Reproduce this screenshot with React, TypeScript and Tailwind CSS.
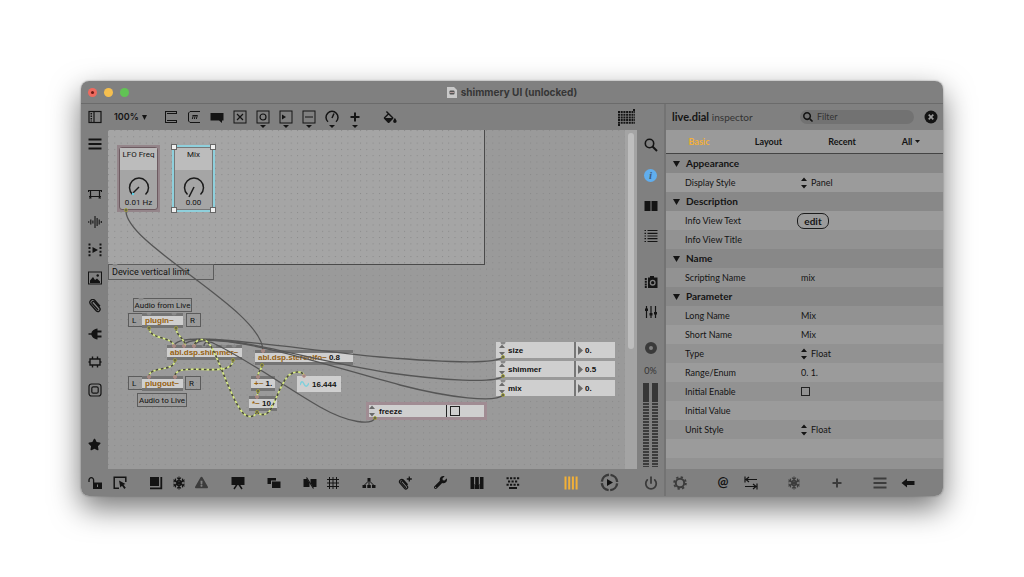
import React, { ReactNode, useState } from "react";
import { Power } from "lucide-react";
import { FaExclamationTriangle, FaSearch, FaStar, FaWrench } from "react-icons/fa";

type Tool = { label: string; icon: ReactNode; menu?: boolean };

const Svg = ({ children }: { children: ReactNode }) => (
  <svg width="14" height="14" viewBox="0 0 14 14" fill="none" stroke="currentColor" strokeWidth="1.2" aria-hidden="true">
    {children}
  </svg>
);

const BoxIcon = ({ children }: { children: ReactNode }) => (
  <Svg>
    <rect x="1" y="1" width="12" height="12" strokeWidth="1" />
    {children}
  </Svg>
);

const clipPath = "M10 11L4.300 4.600a1.300 1.300 0 0 1 2-1.700l5.200 5.900a2.200 2.200 0 0 1-3.300 3L2.300 5a2.900 2.900 0 0 1 4.400-3.700L12 7.200";

const ClipIcon = () => (
  <Svg>
    <path d={clipPath} strokeWidth="1.3" />
  </Svg>
);

const SnowIcon = () => (
  <Svg>
    {[0, 60, 120, 180, 240, 300].map((angle) => (
      <path key={angle} d="M7 7V.6M5 1.600l2 1.800 2-1.800M5.500 4.200L7 5.500l1.500-1.300" strokeWidth="1.1" transform={`rotate(${angle} 7 7)`} />
    ))}
  </Svg>
);

const GearIcon = () => (
  <Svg>
    <circle cx="7" cy="7" r="4.200" strokeWidth="2" />
    <circle cx="7" cy="7" r="5.900" strokeWidth="1.800" strokeDasharray="2.300 2.330" />
  </Svg>
);

const objectTools: Tool[] = [
  {
    label: "Object",
    icon: (
      <Svg>
        <path d="M1.500 1v12M1.500 1.500H13M1.500 12.500H13M3 3.500h10M3 10.500h10M12.500 1.500v2M12.500 10.500v2" strokeWidth="1" />
      </Svg>
    ),
  },
  {
    label: "Message",
    icon: (
      <Svg>
        <path d="M13 1.500H3L1.500 3v8L3 12.500h10" strokeWidth="1" />
        <path d="M5.300 9l1-3.500M7.300 9l1-3.500M9.300 9l1-3.500M5.500 5.500h5" strokeWidth="1" />
      </Svg>
    ),
  },
  {
    label: "Comment",
    icon: (
      <Svg>
        <path d="M.5 3h13v7.500H12V13l-3-2.500H.5z" fill="currentColor" stroke="none" />
      </Svg>
    ),
  },
  { label: "Toggle", icon: <BoxIcon><path d="M4 4l6 6M10 4l-6 6" /></BoxIcon> },
  { label: "Button", menu: true, icon: <BoxIcon><circle cx="7" cy="7" r="3" /></BoxIcon> },
  { label: "Number", menu: true, icon: <BoxIcon><path d="M3 4.500v5L7 7z" fill="currentColor" stroke="none" /></BoxIcon> },
  { label: "Slider", menu: true, icon: <BoxIcon><path d="M3 7h8" /></BoxIcon> },
  { label: "Dial", menu: true, icon: <Svg><path d="M3 11.800a6 6 0 1 1 8 0M7 8l2-4.500" strokeWidth="1.500" /></Svg> },
  { label: "Add", menu: true, icon: <Svg><path d="M7 2.500v9M2.500 7h9" strokeWidth="2" /></Svg> },
];

const sideTools: Tool[] = [
  {
    label: "Objects",
    icon: <Svg><path d="M1 3.500h12M1 9.500h12M2.500 3.500v8M11.500 3.500v8M1 11h2.500M10.500 11H13M.5 3v2M13.500 3v2" strokeWidth="1.200" /></Svg>,
  },
  {
    label: "Audio",
    icon: <Svg><path d="M.7 6.300v1.400M2.800 4.500v5M4.900 5.500v3M7 1v12M9.100 3v8M11.200 4.500v5M13.300 6v2" strokeWidth="1.100" /></Svg>,
  },
  {
    label: "Video",
    icon: (
      <Svg>
        <path d="M1.500.5v13M12.500.5v13" strokeWidth="2" strokeDasharray="2 1.600" />
        <path d="M4.500 4v6L10 7z" fill="currentColor" stroke="none" />
      </Svg>
    ),
  },
  {
    label: "Images",
    icon: (
      <Svg>
        <rect x=".5" y="1" width="13" height="12" strokeWidth="1" />
        <path d="M2 12V9.500L5 6l2 3 2-1.500 3 3V12z" fill="currentColor" stroke="none" />
        <circle cx="9.700" cy="4.500" r="1.200" fill="currentColor" stroke="none" />
      </Svg>
    ),
  },
  { label: "Attachments", icon: <ClipIcon /> },
  {
    label: "Plug-ins",
    icon: (
      <Svg>
        <path d="M.5 6.200h2.800C4 4 5.500 2 9.500 1.500v11C5.500 12 4 10 3.300 7.800H.5z" fill="currentColor" stroke="none" />
        <path d="M9 4.500h4.500M9 9.500h4.500" strokeWidth="1.800" />
      </Svg>
    ),
  },
  {
    label: "Packages",
    icon: <Svg><path d="M2 4h10v6H2zM4.500 1.500V4M9.500 1.500V4M4.500 10v2.500M9.500 10v2.500M.5 7H2M12 7h1.500" strokeWidth="1.400" /></Svg>,
  },
  {
    label: "Snippets",
    icon: (
      <Svg>
        <rect x="1" y="1" width="12" height="12" rx="2.500" />
        <rect x="3.800" y="3.800" width="6.400" height="6.400" rx="1.500" />
      </Svg>
    ),
  },
];

const bottomGroups: Tool[][] = [
  [
    {
      label: "Lock",
      icon: (
        <Svg>
          <path d="M1 6V4a2.300 2.300 0 0 1 4.600 0v3" strokeWidth="1.300" />
          <path d="M5 6.500h9V13H5zM9 8.500V11h1V8.500z" fill="currentColor" fillRule="evenodd" stroke="none" />
        </Svg>
      ),
    },
    {
      label: "Operate while unlocked",
      icon: (
        <Svg>
          <path d="M6 12.300H1.200V1.200h11.600V6" strokeWidth="1.500" />
          <path d="M6 4.500l1.300 7L9 9.800l2.300 3.200 1.500-1.200-2.300-3 2-.8z" fill="currentColor" stroke="none" />
        </Svg>
      ),
    },
  ],
  [
    {
      label: "Patching",
      icon: (
        <Svg>
          <path d="M1 1h9v9H1z" fill="currentColor" stroke="none" />
          <path d="M12.300 1v11.300H1" strokeWidth="1.800" />
        </Svg>
      ),
    },
    { label: "Freeze", icon: <SnowIcon /> },
    { label: "Warnings", icon: <FaExclamationTriangle size={13} className="text-[#3c3c3c]" /> },
  ],
  [
    {
      label: "Presentation",
      icon: (
        <Svg>
          <path d="M.5 1h13v8H.5z" fill="currentColor" stroke="none" />
          <path d="M6 8.500L3 13M8 8.500l3 4.500" strokeWidth="1.500" />
        </Svg>
      ),
    },
  ],
  [{ label: "Encapsulate", icon: <Svg><path d="M.5 2H9v2.500H4V8H.5zM5 5.500h8.500V12H5z" fill="currentColor" stroke="none" /></Svg> }],
  [
    {
      label: "Hide cords",
      icon: (
        <Svg>
          <path d="M.5 3H4l2.500 4v4h-6zM7.500 3h6v8H10L7.500 7z" fill="currentColor" stroke="none" />
          <path d="M3.500 1.500l7 11" strokeWidth="1.200" />
        </Svg>
      ),
    },
    { label: "Grid", icon: <Svg><path d="M3.500 1v12M7 1v12M10.500 1v12M1 3.500h12M1 7h12M1 10.500h12" strokeWidth="1" /></Svg> },
  ],
  [
    {
      label: "Hierarchy",
      icon: (
        <Svg>
          <path d="M5.500 2h3v3h-3zM.5 9H4v3H.5zM5.300 9h3.500v3H5.300zM10 9h3.500v3H10z" fill="currentColor" stroke="none" />
          <path d="M7 4v5M6.500 5l-4 4M7.500 5l4 4" strokeWidth="1" />
        </Svg>
      ),
    },
  ],
  [
    {
      label: "Add attachment",
      icon: (
        <Svg>
          <path d={clipPath} strokeWidth="1.500" transform="translate(0 3) scale(.8)" />
          <path d="M11.300.5v5M8.800 3h5" strokeWidth="1.300" />
        </Svg>
      ),
    },
  ],
  [{ label: "Debug", icon: <FaWrench size={13} /> }],
  [
    {
      label: "Keyboard",
      icon: <Svg><path d="M.5 1h13v12H.5zM4 1v8h1.200V1zM8.800 1v8H10V1zM4.400 8v5h.5V8zM9.200 8v5h.5V8z" fill="currentColor" fillRule="evenodd" stroke="none" /></Svg>,
    },
  ],
  [
    {
      label: "Typing",
      icon: (
        <Svg>
          <path d="M.5 2.300h13M2 5.500h10M.5 8.700h13" strokeWidth="2" strokeDasharray="2.200 1.300" />
          <path d="M3 12h8" strokeWidth="2" />
        </Svg>
      ),
    },
  ],
];

const ToolButton = ({ tool, className = "" }: { tool: Tool; className?: string }) => (
  <button type="button" aria-label={tool.label} className={`flex shrink-0 items-center justify-center ${className}`}>
    {tool.icon}
  </button>
);

const Stepper = () => (
  <svg width="6" height="12" viewBox="0 0 6 12" fill="currentColor" className="shrink-0" aria-hidden="true">
    <path d="M3 .5L6 4H0zM3 11.500L6 8H0z" />
  </svg>
);

function TitleBar() {
  return (
    <header className="relative flex h-[23px] items-center justify-center gap-1 border-b border-[#6b6b6b] bg-[#808080]">
      <div className="absolute left-[7px] flex gap-[7px]">
        <button type="button" aria-label="Close" className="flex size-[9px] items-center justify-center rounded-full bg-[#ee6a5f]">
          <span className="size-[3px] rounded-full bg-[#6e1a14]" />
        </button>
        <button type="button" aria-label="Minimize" className="size-[9px] rounded-full bg-[#f5bf4f]" />
        <button type="button" aria-label="Zoom" className="size-[9px] rounded-full bg-[#61c454]" />
      </div>
      <svg width="10" height="11" viewBox="0 0 10 11" aria-hidden="true">
        <path d="M0 0h7l3 3v8H0z" fill="#c9c9c9" />
        <rect x="2.500" y="3.500" width="5" height="4" rx="1" fill="#555" />
        <path d="M3 5.500h4" stroke="#b09a9a" />
      </svg>
      <h1 className="font-['Inter',sans-serif] text-[10px] font-bold text-[#363636]">shimmery UI (unlocked)</h1>
    </header>
  );
}

function Toolbar() {
  return (
    <div className="flex h-[26px] items-center bg-[#808080]">
      <ToolButton
        className="w-[27px]"
        tool={{
          label: "Sidebar",
          icon: (
            <Svg>
              <rect x="1" y="1.500" width="12" height="11" />
              <path d="M6 1.500v11" />
              <path d="M3.300 3v8.500" strokeWidth="1.500" strokeDasharray="1.500 1" />
            </Svg>
          ),
        }}
      />
      <div className="ml-1.5 mr-[11px] flex w-[34px] items-center gap-0.5">
        <select aria-label="Zoom level" className="w-[26px] appearance-none font-['Inter',sans-serif] text-[9px] font-semibold">
          <option>100%</option>
        </select>
        <svg width="5" height="5" viewBox="0 0 5 5" fill="currentColor" aria-hidden="true">
          <path d="M0 0h5L2.500 5z" />
        </svg>
      </div>
      {objectTools.map((tool) => (
        <button key={tool.label} type="button" aria-label={tool.label} className="relative flex h-[26px] w-[23px] items-center justify-center">
          {tool.icon}
          {tool.menu && (
            <svg width="6" height="3" viewBox="0 0 6 3" fill="currentColor" className="absolute bottom-[2px]" aria-hidden="true">
              <path d="M0 0h6L3 3z" />
            </svg>
          )}
        </button>
      ))}
      <ToolButton
        className="ml-3 w-[23px]"
        tool={{
          label: "Format",
          icon: (
            <svg width="14" height="12" viewBox="2 0 20 17" fill="currentColor" aria-hidden="true">
              <path d="M16.560 8.940L7.620 0 6.210 1.410l2.380 2.380-5.150 5.150c-.59.59-.59 1.540 0 2.120l5.500 5.500c.29.29.68.44 1.060.44s.77-.15 1.060-.44l5.500-5.500c.59-.58.59-1.530 0-2.120zM5.210 10L10 5.210 14.790 10H5.210zM19 10s-2.500 3-2.500 4.500a2.500 2.500 0 0 0 5 0C21.500 13 19 10 19 10z" />
            </svg>
          ),
        }}
      />
      <ToolButton
        className="ml-auto mr-[26px] w-[23px]"
        tool={{
          label: "Matrix",
          icon: (
            <svg width="17" height="18" viewBox="0 0 17 18" stroke="currentColor" strokeWidth="2" strokeDasharray="2 .7" aria-hidden="true">
              <path d="M0 4h17M0 6.700h17M0 9.400h17M0 12.100h17M0 14.800h17M15 2h2M0 17h2" />
            </svg>
          ),
        }}
      />
    </div>
  );
}

function SideBar() {
  return (
    <nav className="flex w-[27px] shrink-0 flex-col items-center bg-[#808080]">
      <ToolButton
        className="mb-[22px] h-7"
        tool={{ label: "Menu", icon: <Svg><path d="M.5 2.500h13M.5 7h13M.5 11.500h13" strokeWidth="2" /></Svg> }}
      />
      {sideTools.map((tool) => (
        <ToolButton key={tool.label} tool={tool} className="h-7" />
      ))}
      <ToolButton className="mt-auto mb-[11px] h-7" tool={{ label: "Favorites", icon: <FaStar size={13} /> }} />
    </nav>
  );
}

const Meter = () => (
  <div className="flex w-[6px] flex-col">
    <div className="h-[19px] bg-[#363636]" />
    <div className="flex-1 bg-[repeating-linear-gradient(to_bottom,#7c7c7c_0px,#7c7c7c_1px,#3c3c3c_1px,#3c3c3c_3px)]" />
  </div>
);

function RightBar() {
  return (
    <nav className="flex w-[27px] shrink-0 flex-col items-center bg-[#808080]">
      <ToolButton
        className="h-[30px]"
        tool={{
          label: "Search",
          icon: (
            <Svg>
              <circle cx="5.500" cy="5.500" r="4.200" strokeWidth="1.600" />
              <path d="M8.500 8.500L13 13" strokeWidth="2" />
            </Svg>
          ),
        }}
      />
      <button type="button" aria-label="Inspector" className="my-[9px] flex size-[13px] items-center justify-center rounded-full bg-[#61aeee] font-['Liberation_Serif',serif] text-[11px] leading-none font-bold text-[#3d5d7d] italic">
        i
      </button>
      <ToolButton className="h-[30px]" tool={{ label: "Reference", icon: <Svg><path d="M.5 2h6v10h-6zM7.500 2h6v10h-6z" fill="currentColor" stroke="none" /></Svg> }} />
      <ToolButton
        className="h-[30px]"
        tool={{
          label: "Console",
          icon: <Svg><path d="M.5 1.500H2M.5 4.300H2M.5 7H2M.5 9.700H2M.5 12.500H2M3.500 1.500h10M3.500 4.300h10M3.500 7h10M3.500 9.700h10M3.500 12.500h10" strokeWidth="1.200" /></Svg>,
        }}
      />
      <ToolButton
        className="mt-4 h-[30px]"
        tool={{
          label: "Snapshots",
          icon: (
            <Svg>
              <path d="M4 2.500h2V1h4v1.500h3.500V13H4z" fill="currentColor" stroke="none" />
              <path d="M1.800 3v10" strokeWidth="2" strokeDasharray="2 .7" />
              <circle cx="8.700" cy="7.700" r="2.300" stroke="#808080" strokeWidth="1.300" />
            </Svg>
          ),
        }}
      />
      <ToolButton
        className="h-[30px]"
        tool={{
          label: "Parameters",
          icon: (
            <Svg>
              <path d="M2.500 1v12M7 1v12M11.500 1v12" strokeWidth="1.200" />
              <path d="M1 3.500h3v2.500H1zM5.500 8h3v2.500h-3zM10 7h3v2.500h-3z" fill="currentColor" stroke="none" />
            </Svg>
          ),
        }}
      />
      <ToolButton className="mt-2 h-[26px] text-[#3a3a3a]" tool={{ label: "Record", icon: <Svg><circle cx="7" cy="7" r="4" strokeWidth="4" /></Svg> }} />
      <output className="mt-1 font-['Lato',sans-serif] text-[9px] leading-[12px] text-[#333]">0%</output>
      <div className="mt-1.5 mb-0.5 flex flex-1 gap-[3px]">
        <Meter />
        <Meter />
      </div>
    </nav>
  );
}

// Patcher: everything below is placed in canvas coordinates
type Box = { text: string; arg?: string; place: string };

const objects: Box[] = [
  { text: "plugin~", place: "left-[34px] top-[183px] w-[41px]" },
  { text: "abl.dsp.shimmer~", place: "left-[59px] top-[215px] w-[75px]" },
  { text: "plugout~", place: "left-[34px] top-[246px] w-[41px]" },
  { text: "abl.dsp.stereolfo~", arg: "0.8", place: "left-[147px] top-[220px] w-[98px]" },
  { text: "+~", arg: "1.", place: "left-[143px] top-[246px] w-[24px]" },
  { text: "*~", arg: "10.", place: "left-[141px] top-[266px] w-[28px]" },
];

const comments = [
  { text: "Device vertical limit", place: "left-0 top-[134px] w-[106px] h-[16px] text-[9px] pl-[3px]" },
  { text: "Audio from Live", place: "left-[25px] top-[168px] w-[59px] h-[14px] text-[8px] justify-center" },
  { text: "L", place: "left-[20px] top-[183px] w-[15px] h-[14px] text-[8px] pl-[3px]" },
  { text: "R", place: "left-[78px] top-[183px] w-[15px] h-[14px] text-[8px] pl-[3px]" },
  { text: "L", place: "left-[20px] top-[246px] w-[15px] h-[14px] text-[8px] pl-[3px]" },
  { text: "R", place: "left-[77px] top-[246px] w-[16px] h-[14px] text-[8px] pl-[3px]" },
  { text: "Audio to Live", place: "left-[29px] top-[263px] w-[50px] h-[14px] text-[8px] justify-center" },
];

const attributes = [
  { name: "size", value: "0.", place: "left-[388px] top-[212px]" },
  { name: "shimmer", value: "0.5", place: "left-[388px] top-[231px]" },
  { name: "mix", value: "0.", place: "left-[388px] top-[250px]" },
];

const controlWires = [
  "M18 81C18 115 155 180 155 221",
  "M395 227C388 235 332 232 272 227C200 220 130 209 92 209C76 209 67 211 66 216",
  "M395 246C388 254 332 250 282 243C210 232 150 212 106 210C90 209 76 211 76 216",
  "M395 265C388 273 342 268 292 255C222 236 150 213 112 211C96 209 88 211 86 216",
  "M267 288C264 295 242 294 212 277C182 260 140 230 107 214C102 211 96 211 96 216",
];

const signalWires = [
  "M41 198C42 210 64 206 66 216",
  "M68 198C68 206 77 208 77 216",
  "M67 230C67 242 42 236 41 246",
  "M125 230C125 250 68 230 67 246",
  "M154 235C154 240 150 241 150 246",
  "M150 261C150 264 149 264 149 267",
  "M149 282C146 288 138 289 132 279C120 261 111 228 102 215C97 207 88 208 86 216",
  "M149 282C154 287 161 285 165 275C171 262 174 252 181 245C188 240 196 242 196 246",
];

const outlets = [[18, 80], [395, 227], [395, 246], [395, 265], [267, 288], [41, 198], [68, 198], [67, 230], [125, 230], [154, 235], [150, 261], [149, 282]];
const inlets = [[66, 216], [76, 216], [86, 216], [41, 247], [67, 247], [155, 221], [150, 247], [149, 267], [196, 246]];
const idleInlets = [[41, 184], [66, 184], [96, 216], [106, 216], [116, 216], [126, 216], [7, 135], [33, 169], [395, 213], [395, 232], [395, 251]];

type DialProps = { label: string; value: string; pointer: string; className: string };

function Dial({ label, value, pointer, className }: DialProps) {
  return (
    <div className={`absolute flex flex-col items-center font-['Roboto',sans-serif] text-[8px] leading-[10px] font-normal ${className}`}>
      <div className="h-[22px] w-full bg-[#bcbcbc] pt-0.5 text-center">{label}</div>
      <svg width="26" height="26" viewBox="0 0 26 26" fill="none" stroke="#1c1c1c" strokeWidth="1.5" className="mt-1" aria-hidden="true">
        <path d="M6.500 20.500a9.500 9.500 0 1 1 13 0" />
        <path d={pointer} />
      </svg>
      <div className="-mt-0.5">{value}</div>
    </div>
  );
}

const Handle = ({ className }: { className: string }) => (
  <span className={`absolute size-[6px] border border-[#666] bg-[#efefef] ${className}`} />
);

function Canvas() {
  const [frozen, setFrozen] = useState(false);

  return (
    <main className="relative min-w-0 flex-1 overflow-hidden bg-[#9a9a9a] font-['Liberation_Sans',sans-serif] text-[8px] leading-[9px] font-bold">
      <div className="absolute top-0 left-0 h-[135px] w-[377px] border-r border-b border-[#4a4a4a] bg-[#a5a5a5]" />
      <svg className="absolute inset-0 size-full" aria-hidden="true">
        <defs>
          <pattern id="dots" width="6.300" height="6.300" patternUnits="userSpaceOnUse">
            <rect width="1" height="1" fill="#898989" />
          </pattern>
        </defs>
        <rect width="100%" height="100%" fill="url(#dots)" />
      </svg>

      <div className="absolute top-[15px] left-[9px] h-[67px] w-[43px] bg-[#94858a]" />
      <Dial
        label="LFO Freq"
        value="0.01 Hz"
        pointer="M13 13L7 19"
        className="top-[17px] left-[11px] h-[63px] w-[39px] rounded-[3px] border border-[#6c5a60] bg-[#a5a5a5]"
      />
      <Dial
        label="Mix"
        value="0.00"
        pointer="M13 13L8 23"
        className="top-[17px] left-[66px] h-[63px] w-[39px] border border-[#777] bg-[#a5a5a5] outline-2 outline-[#8fd0dc]"
      />
      <Handle className="top-[14px] left-[63px]" />
      <Handle className="top-[14px] left-[102px]" />
      <Handle className="top-[77px] left-[63px]" />
      <Handle className="top-[77px] left-[102px]" />

      {comments.map((c) => (
        <p key={c.place} className={`absolute flex items-center border border-[#5c5c5c] font-['Roboto',sans-serif] font-normal whitespace-nowrap text-[#111] ${c.place}`}>
          {c.text}
        </p>
      ))}

      {objects.map((o) => (
        <div key={o.text} className={`absolute h-[15px] overflow-hidden border-y-3 border-[#747474] bg-[#cfcfcf] pl-[3px] whitespace-nowrap ${o.place}`}>
          <span className="text-[#95600f]">{o.text}</span> {o.arg}
        </div>
      ))}

      <div className="absolute top-[246px] left-[189px] flex h-[16px] w-[44px] items-center gap-[3px] bg-[#cfcfcf] pl-[3px]">
        <svg width="9" height="8" viewBox="0 0 9 8" fill="none" stroke="#7fd0dc" strokeWidth="1.500" aria-hidden="true">
          <path d="M0 5Q2-1 4 4T9 3" />
        </svg>
        16.444
      </div>

      {attributes.map((a) => (
        <div key={a.name} className={`absolute flex h-[16px] w-[119px] items-center bg-[#cfcfcf] pl-[3px] text-[#6a6a6a] ${a.place}`}>
          <Stepper />
          <select aria-label="Attribute" className="ml-[3px] h-full w-[66px] appearance-none text-[#111]">
            <option>{a.name}</option>
          </select>
          <span className="h-full w-[2px] bg-[#777]" />
          <svg width="5" height="9" viewBox="0 0 5 9" fill="currentColor" className="ml-[2px]" aria-hidden="true">
            <path d="M0 0l5 4.500L0 9z" />
          </svg>
          <input aria-label={a.name} defaultValue={a.value} className="ml-[2px] w-6 text-[#111]" />
        </div>
      ))}

      <div className="absolute top-[272px] left-[258px] flex h-[18px] w-[121px] items-center border-3 border-[#a08c93] bg-[#cfcfcf] text-[#6a6a6a]">
        <Stepper />
        <label htmlFor="freeze" className="ml-1 flex-1 text-[#111]">
          freeze
        </label>
        <span className="h-full w-px bg-[#222]" />
        <input
          id="freeze"
          type="checkbox"
          checked={frozen}
          onChange={(e) => setFrozen(e.target.checked)}
          className="ml-[3px] mr-[24px] size-[10px] appearance-none border border-[#222] checked:bg-[#222]"
        />
      </div>

      <svg className="pointer-events-none absolute inset-0 size-full" fill="none" aria-hidden="true">
        {idleInlets.map(([x, y]) => (
          <path key={`${x}-${y}`} d={`M${x - 2.5} ${y - 1}a2.500 2.500 0 0 0 5 0z`} fill="#8a8a8a" />
        ))}
        {controlWires.map((d) => (
          <path key={d} d={d} stroke="#555" strokeWidth="1.300" />
        ))}
        {signalWires.map((d) => (
          <g key={d}>
            <path d={d} stroke="#d8ec80" strokeWidth="1.600" />
            <path d={d} stroke="#4a4a40" strokeWidth="1.600" strokeDasharray="2.600 2.600" />
          </g>
        ))}
        {outlets.map(([x, y]) => (
          <circle key={`${x}-${y}`} cx={x} cy={y} r="1.500" fill="#555" stroke="#a8a830" strokeWidth=".8" />
        ))}
        {inlets.map(([x, y]) => (
          <circle key={`${x}-${y}`} cx={x} cy={y} r="1.400" fill="#8a8a8a" stroke="#c98a80" strokeWidth=".8" />
        ))}
        <circle cx="25" cy="64" r="1.200" fill="#5fd0e8" />
      </svg>
    </main>
  );
}

function BottomBar() {
  return (
    <footer className="flex h-[27px] items-center gap-[13px] bg-[#808080] pl-0.5">
      {bottomGroups.map((group, i) => (
        <div key={i} className="flex first:gap-0.5">
          {group.map((tool) => (
            <ToolButton key={tool.label} tool={tool} className="h-[26px] w-[23px]" />
          ))}
        </div>
      ))}
      <div className="ml-auto flex h-[26px] items-center gap-4">
        <ToolButton
          className="w-[23px] text-[#f2b037]"
          tool={{ label: "Signal probe", icon: <Svg><path d="M1.500.5v13M5.200.5v13M8.900.5v13M12.600.5v13" strokeWidth="2" /></Svg> }}
        />
        <ToolButton
          className="w-[23px] text-[#3a3a3a]"
          tool={{
            label: "Transport",
            icon: (
              <svg width="19" height="19" viewBox="0 0 19 19" fill="none" stroke="currentColor" aria-hidden="true">
                <circle cx="9.500" cy="9.500" r="7.700" strokeWidth="2.400" strokeDasharray="10.500 1.600" strokeDashoffset="-.8" />
                <path d="M7 6v7l6-3.500z" fill="#111" stroke="none" />
              </svg>
            ),
          }}
        />
        <ToolButton className="w-[27px] text-[#3a3a3a]" tool={{ label: "Audio on", icon: <Power size={14} strokeWidth={3} /> }} />
      </div>
    </footer>
  );
}

type Row = {
  kind: "section" | "select" | "text" | "edit" | "check" | "empty";
  label: string;
  value?: string;
};

const rows: Row[] = [
  { kind: "section", label: "Appearance" },
  { kind: "select", label: "Display Style", value: "Panel" },
  { kind: "section", label: "Description" },
  { kind: "edit", label: "Info View Text" },
  { kind: "text", label: "Info View Title", value: "" },
  { kind: "section", label: "Name" },
  { kind: "text", label: "Scripting Name", value: "mix" },
  { kind: "section", label: "Parameter" },
  { kind: "text", label: "Long Name", value: "Mix" },
  { kind: "text", label: "Short Name", value: "Mix" },
  { kind: "select", label: "Type", value: "Float" },
  { kind: "text", label: "Range/Enum", value: "0. 1." },
  { kind: "check", label: "Initial Enable" },
  { kind: "text", label: "Initial Value", value: "" },
  { kind: "select", label: "Unit Style", value: "Float" },
  { kind: "empty", label: "" },
];

function PropertyRow({ row, index }: { row: Row; index: number }) {
  const id = row.label.toLowerCase().replace(/\W/g, "-");

  if (row.kind === "section") {
    return (
      <button type="button" className="flex h-[19px] w-full items-center gap-1.5 bg-[#888888] pl-[7px] text-[10px] font-bold">
        <svg width="7" height="6" viewBox="0 0 7 6" fill="currentColor" aria-hidden="true">
          <path d="M0 0h7L3.500 6z" />
        </svg>
        {row.label}
      </button>
    );
  }

  return (
    <div className={`flex h-[19px] items-center pl-[19px] ${index % 2 ? "bg-[#9b9b9b]" : "bg-[#929292]"}`}>
      {row.kind !== "empty" && (
        <label htmlFor={id} className="w-[116px] shrink-0">
          {row.label}
        </label>
      )}
      {row.kind === "select" && (
        <>
          <Stepper />
          <select id={id} className="ml-1 w-20 appearance-none">
            <option>{row.value}</option>
          </select>
        </>
      )}
      {row.kind === "text" && <input id={id} defaultValue={row.value} className="w-24" />}
      {row.kind === "edit" && (
        <button id={id} type="button" className="-ml-1 h-[16px] w-[32px] rounded-[7px] border border-[#1c1c1c] text-[10px] leading-[12px] font-bold">
          edit
        </button>
      )}
      {row.kind === "check" && <input id={id} type="checkbox" className="size-[9px] appearance-none border border-[#222] checked:bg-[#222]" />}
    </div>
  );
}

const inspectorGroups: Tool[][] = [
  [{ label: "Settings", icon: <span className="text-[#3c3c3c]"><GearIcon /></span> }],
  [
    { label: "Attribute names", icon: <span className="text-[13px] leading-none font-bold">@</span> },
    { label: "Tab width", icon: <Svg><path d="M1 .5v6M13 7.500v6M2 3.500h11M1 10.500h11M5 1L2 3.500 5 6M9 8l3 2.500L9 13" /></Svg> },
  ],
  [{ label: "Freeze attribute", icon: <span className="text-[#3c3c3c]"><SnowIcon /></span> }],
  [{ label: "Add attribute", icon: <Svg><path d="M7 2.500v9M2.500 7h9" strokeWidth="2" stroke="#3c3c3c" /></Svg> }],
  [
    { label: "List", icon: <Svg><path d="M.5 2.500h13M.5 7h13M.5 11.500h13" strokeWidth="2" stroke="#3c3c3c" /></Svg> },
    { label: "Back", icon: <Svg><path d="M.5 7L6 2.500V5h7.500v4H6v2.500z" fill="currentColor" stroke="none" /></Svg> },
  ],
];

function Inspector() {
  const [tab, setTab] = useState("Basic");
  const [filter, setFilter] = useState("");

  return (
    <aside className="flex w-[277px] shrink-0 flex-col bg-[#808080] font-['Lato',sans-serif] text-[9px]">
      <div className="flex h-[26px] items-center pl-1.5 text-[11px]">
        <h2 className="w-[128px]">
          <b className="font-bold">live.dial</b> <span className="text-[10px] text-[#333]">inspector</span>
        </h2>
        <div className="flex h-[14px] w-[114px] items-center gap-1 rounded-full bg-[#727272] pl-[3px]">
          <FaSearch size={10} />
          <input
            aria-label="Filter"
            placeholder="Filter"
            value={filter}
            onChange={(e) => setFilter(e.target.value)}
            className="w-20 text-[9px] outline-none placeholder:text-[#333]"
          />
        </div>
        <button type="button" aria-label="Close inspector" className="ml-auto mr-[5px]">
          <Svg>
            <circle cx="7" cy="7" r="6.500" fill="currentColor" stroke="none" />
            <path d="M4.700 4.700l4.600 4.600M9.300 4.700L4.700 9.300" stroke="#9a9a9a" strokeWidth="1.700" />
          </Svg>
        </button>
      </div>

      <div className="grid h-[24px] grid-cols-[66fr_73fr_74fr_64fr] border-b border-[#444] bg-[#9a9a9a]">
        {["Basic", "Layout", "Recent", "All"].map((name) => (
          <button
            key={name}
            type="button"
            onClick={() => setTab(name)}
            className={`flex items-center justify-center gap-[3px] text-[9px] font-bold ${tab === name ? "text-[#f2b037]" : ""}`}
          >
            {name}
            {name === "All" && (
              <svg width="5" height="3" viewBox="0 0 5 3" fill="currentColor" aria-hidden="true">
                <path d="M0 0h5L2.500 3z" />
              </svg>
            )}
          </button>
        ))}
      </div>

      <form className="flex-1 bg-[#929292]">
        {rows.map((row, i) => (
          <PropertyRow key={i} row={row} index={i} />
        ))}
      </form>

      <div className="flex h-[27px] items-center gap-[15px]">
        {inspectorGroups.map((group, i) => (
          <div key={i} className="flex">
            {group.map((tool) => (
              <ToolButton key={tool.label} tool={tool} className="h-[26px] w-7" />
            ))}
          </div>
        ))}
      </div>
    </aside>
  );
}

export default function App() {
  return (
    <div className="min-h-screen bg-white p-[81px]">
      <div className="overflow-hidden rounded-[8px] text-[#141414] shadow-[0_12px_30px_rgba(0,0,0,0.55),0_0_2px_rgba(0,0,0,0.4)]">
        <TitleBar />
        <div className="flex">
          <div className="flex min-w-0 flex-1 flex-col">
            <Toolbar />
            <div className="flex min-h-[339px] flex-1">
              <SideBar />
              <Canvas />
              <div className="w-[12px] shrink-0 bg-[#a4a4a4] px-[3px] pt-[3px]">
                <div className="h-[216px] rounded-full bg-[#bebebe]" />
              </div>
              <RightBar />
            </div>
            <BottomBar />
          </div>
          <div className="w-[2px] shrink-0 bg-[#737373]" />
          <Inspector />
        </div>
      </div>
    </div>
  );
}
